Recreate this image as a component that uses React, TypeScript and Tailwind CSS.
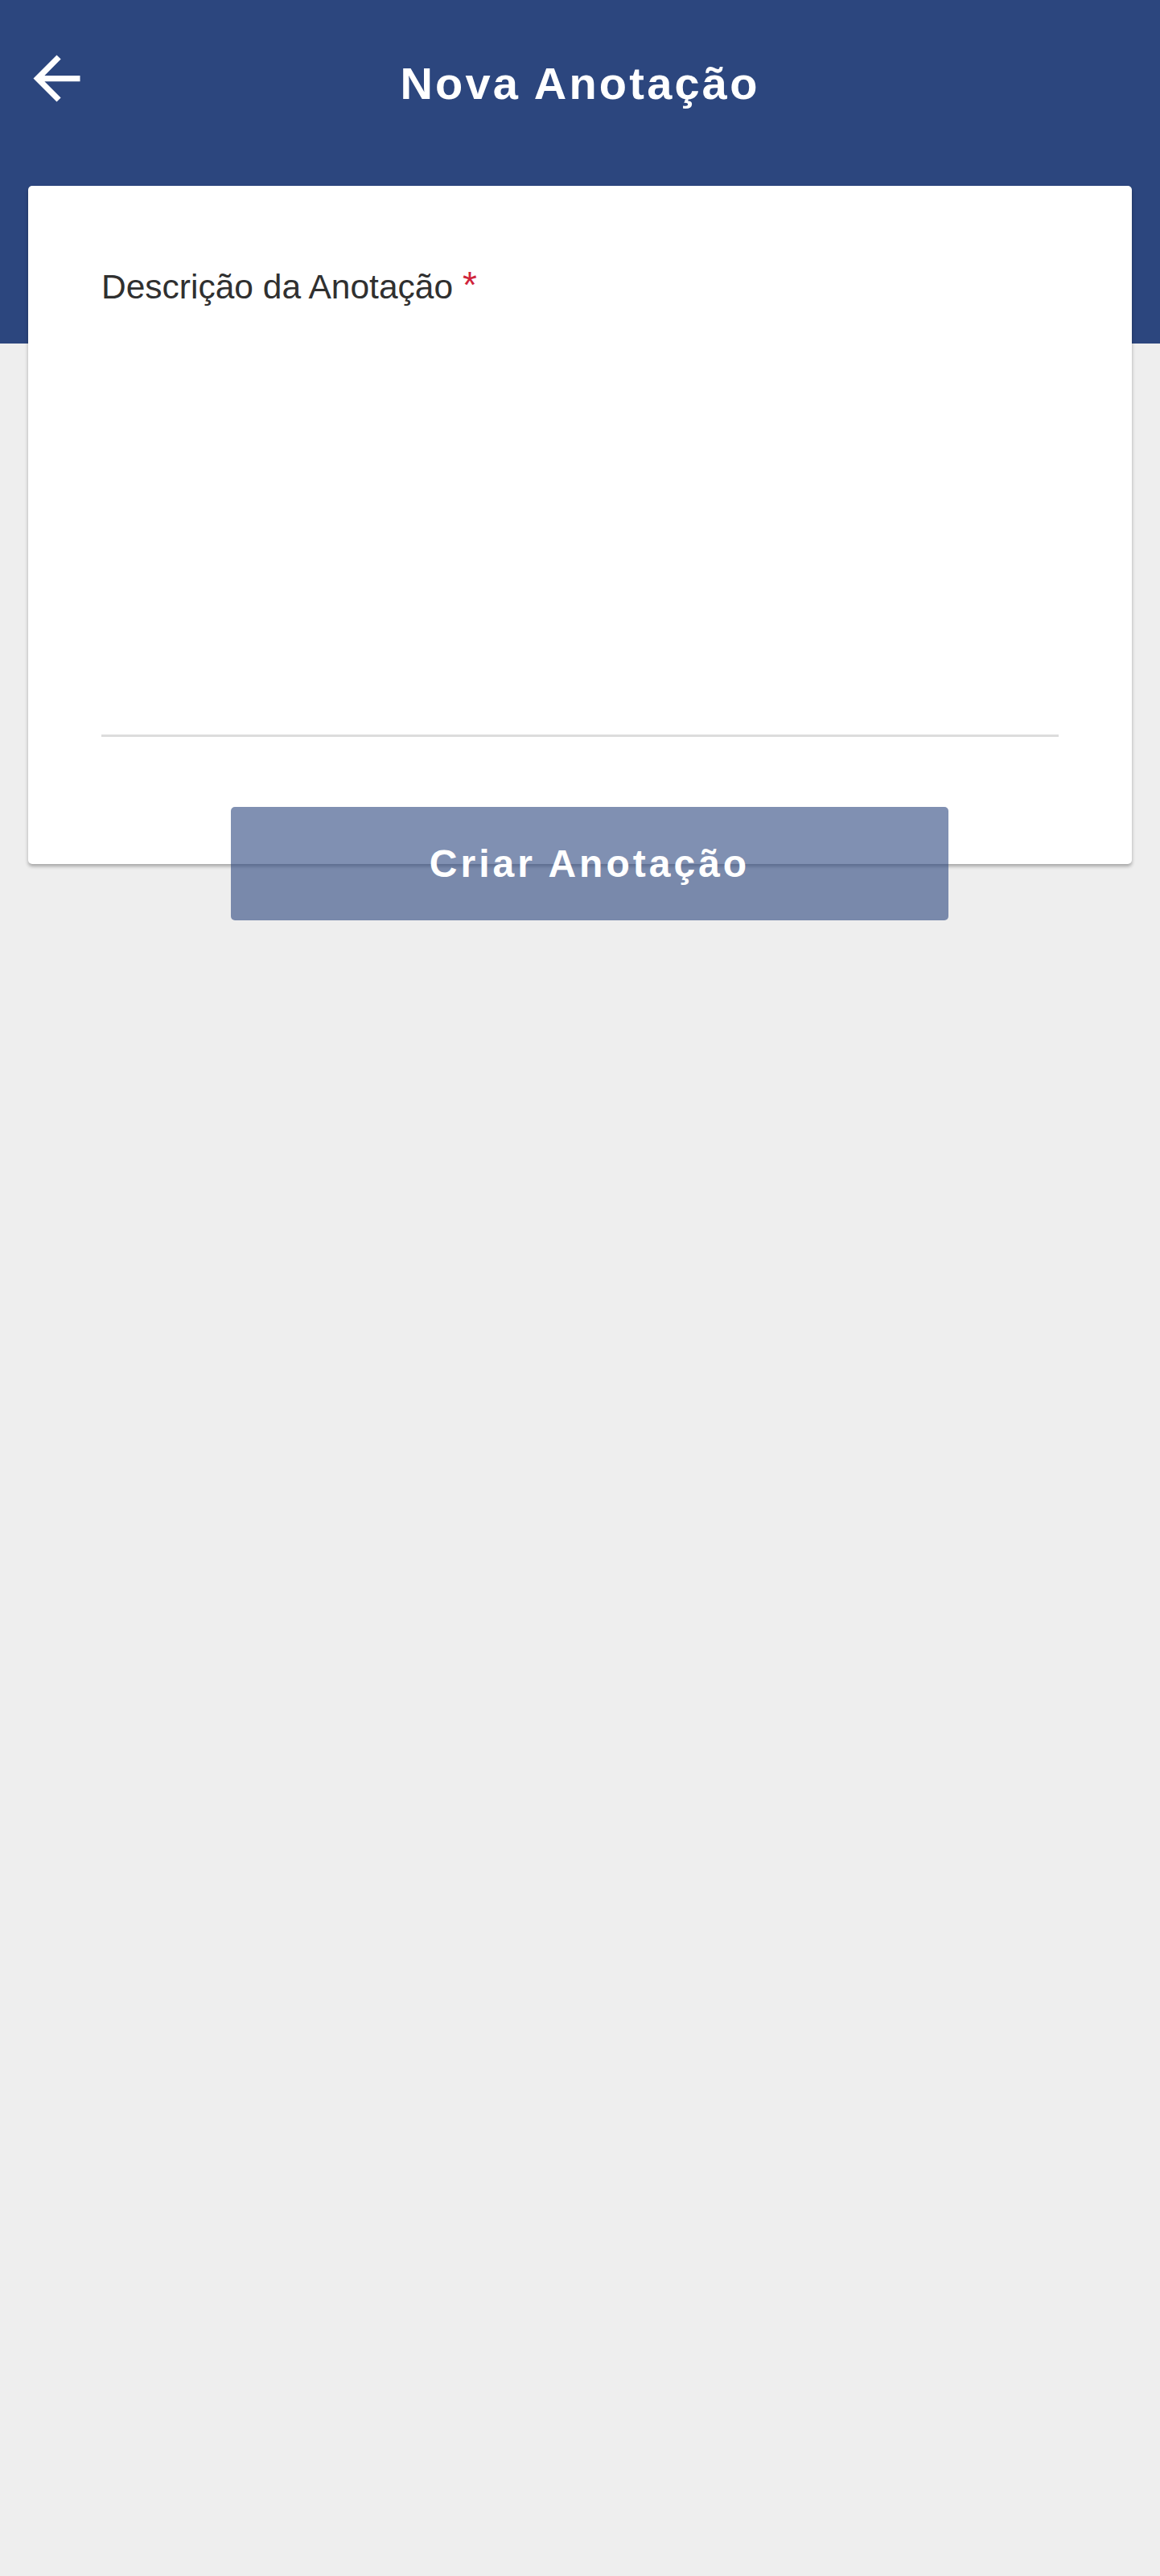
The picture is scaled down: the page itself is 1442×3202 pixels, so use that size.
export default function App() {
  return (
    <main className="min-h-[3202px] bg-[#eeeeee] font-['Liberation_Sans',Arial,sans-serif]">
      {/* barra do topo */}
      <header className="h-[427px] bg-[#2c467e] pt-[54px]">
        <div className="grid grid-cols-[1fr_auto_1fr] items-start">
          <div className="pl-[27px]">
            <svg width="87" height="87" viewBox="0 0 24 24" fill="#ffffff">
              <path d="M20 11H7.83l5.59-5.59L12 4l-8 8 8 8 1.41-1.41L7.83 13H20v-2z" />
            </svg>
          </div>
          <h1 className="mt-[22px] text-[56px] leading-none font-bold tracking-[3.2px] text-white">
            Nova Anotação
          </h1>
          <div />
        </div>
      </header>

      <div className="-mt-[196px] flex flex-col">
        <div className="mx-[35px] rounded-[5px] bg-white px-[91px] pt-[105px] pb-[158px] shadow-[0_3px_4px_rgba(0,0,0,0.3)]">
          <label className="block h-[42px] text-[42.5px] leading-none text-[#303030]">
            Descrição da Anotação
            <span className="relative -top-[5px] ml-[12px] inline-block h-[42px] align-top text-[46px] leading-none text-[#d0243b]">*</span>
          </label>
          <textarea className="block h-[538px] w-full resize-none border-b-[3px] border-[#dcdcdc] bg-transparent outline-none" />
        </div>

        <button className="relative -mt-[71px] ml-[287px] flex h-[141px] w-[892px] items-center justify-center rounded-[5px] bg-[#2c467e]/60 text-[48px] font-bold tracking-[4px] text-white">
          Criar Anotação
        </button>
      </div>
    </main>
  );
}
